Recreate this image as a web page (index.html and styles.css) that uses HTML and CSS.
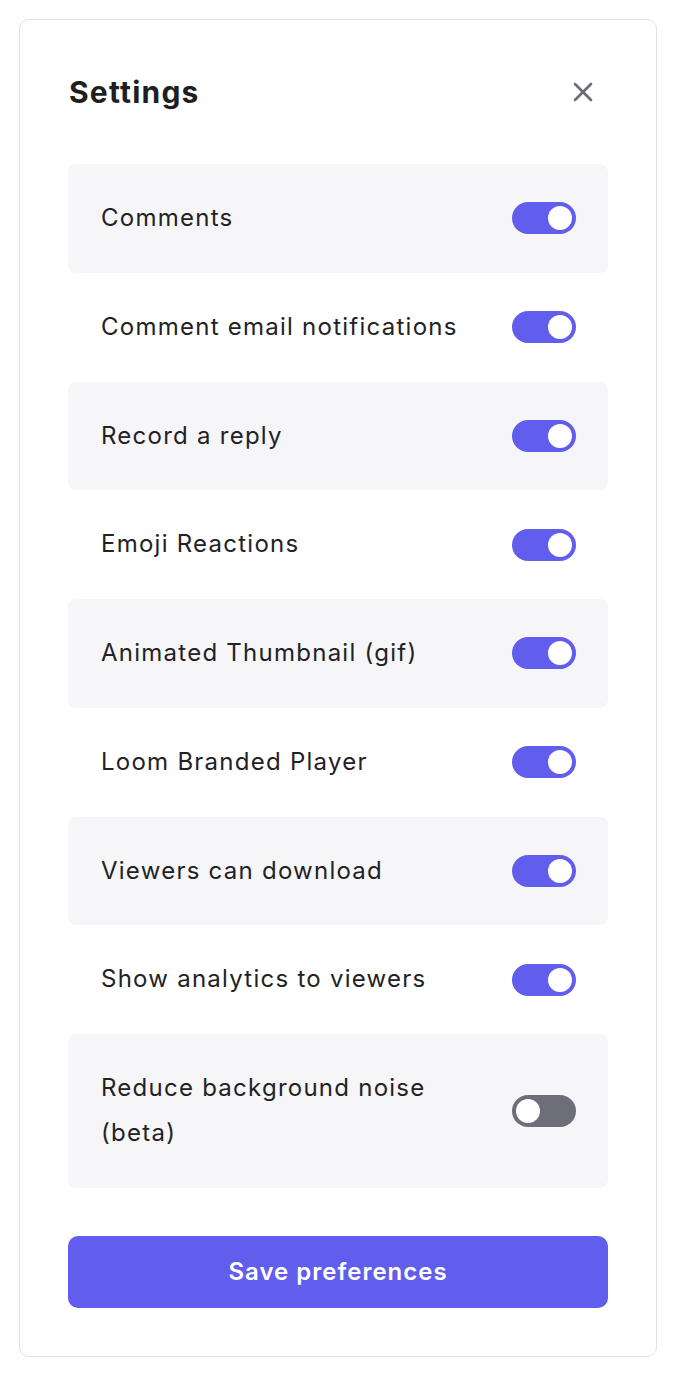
FILE: index.html
```html
<!DOCTYPE html>
<html>
  <head>
    <title>Settings</title>
    <link rel="stylesheet" href="styles.css">
  </head>
  <body>
    <div class="settings-card">
      <div class="settings-header">
        <h1 class="settings-title">Settings</h1>
        <button class="close-button" aria-label="Close">
          <svg width="20" height="20" viewBox="0 0 20 20">
            <path d="M2 2 L18 18 M18 2 L2 18" stroke="#6b6a76" stroke-width="2.6" stroke-linecap="round" fill="none"/>
          </svg>
        </button>
      </div>

      <div class="settings-list">
        <div class="setting-row shaded">
          <span class="setting-label">Comments</span>
          <span class="toggle on"><span class="knob"></span></span>
        </div>
        <div class="setting-row">
          <span class="setting-label">Comment email notifications</span>
          <span class="toggle on"><span class="knob"></span></span>
        </div>
        <div class="setting-row shaded">
          <span class="setting-label">Record a reply</span>
          <span class="toggle on"><span class="knob"></span></span>
        </div>
        <div class="setting-row">
          <span class="setting-label">Emoji Reactions</span>
          <span class="toggle on"><span class="knob"></span></span>
        </div>
        <div class="setting-row shaded">
          <span class="setting-label">Animated Thumbnail (gif)</span>
          <span class="toggle on"><span class="knob"></span></span>
        </div>
        <div class="setting-row">
          <span class="setting-label">Loom Branded Player</span>
          <span class="toggle on"><span class="knob"></span></span>
        </div>
        <div class="setting-row shaded">
          <span class="setting-label">Viewers can download</span>
          <span class="toggle on"><span class="knob"></span></span>
        </div>
        <div class="setting-row">
          <span class="setting-label">Show analytics to viewers</span>
          <span class="toggle on"><span class="knob"></span></span>
        </div>
        <div class="setting-row shaded">
          <span class="setting-label">Reduce background noise (beta)</span>
          <span class="toggle"><span class="knob"></span></span>
        </div>
      </div>

      <button class="save-button">Save preferences</button>
    </div>
  </body>
</html>
```

FILE: styles.css
```css
body {
  margin: 0;
  padding: 19px 33px 31px 19px;
  font-family: "Inter", "Liberation Sans", sans-serif;
  color: #222226;
  background: #ffffff;
}
.settings-card {
  border: 1px solid #e2e2e4;
  border-radius: 10px;
  padding: 48px;
  height: 1240px;
}
.settings-header {
  display: flex;
  align-items: center;
  justify-content: space-between;
  height: 48px;
  margin-bottom: 48px;
}
.settings-title {
  margin: 0;
  font-size: 30px;
  font-weight: 700;
  letter-spacing: 1.2px;
  color: #1f1f22;
  padding-left: 1px;
}
.close-button {
  border: none;
  background: none;
  padding: 0;
  margin-right: 15px;
  width: 20px;
  height: 20px;
  display: flex;
}
.setting-row {
  display: flex;
  align-items: center;
  gap: 32px;
  padding: 32px 32px 32px 33px;
  border-radius: 8px;
}
.setting-row.shaded {
  background: #f6f6f8;
}
.setting-label {
  flex: 1;
  font-size: 24px;
  line-height: 44.75px;
  letter-spacing: 1.25px;
}
.toggle {
  flex: none;
  display: flex;
  align-items: center;
  width: 64px;
  height: 32px;
  border-radius: 16px;
  background: #6e6d7a;
  padding: 0 4px;
  box-sizing: border-box;
}
.toggle.on {
  background: #615ded;
  justify-content: flex-end;
}
.knob {
  width: 24px;
  height: 24px;
  border-radius: 50%;
  background: #ffffff;
}
.save-button {
  display: block;
  width: 100%;
  height: 72px;
  margin-top: 48px;
  border: none;
  border-radius: 10px;
  background: #615ded;
  color: #ffffff;
  font-family: inherit;
  font-size: 24px;
  font-weight: 600;
  letter-spacing: 1px;
}
```
